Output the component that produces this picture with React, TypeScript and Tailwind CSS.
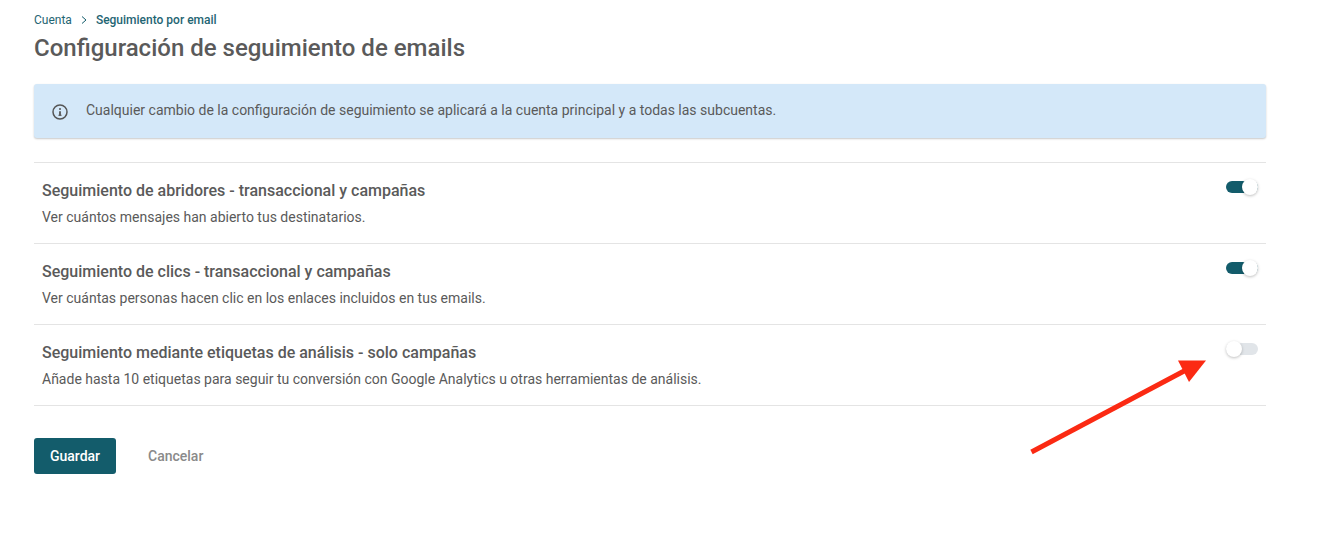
import React from 'react';

const rows = [
	{
		title: 'Seguimiento de abridores - transaccional y campañas',
		desc: 'Ver cuántos mensajes han abierto tus destinatarios.',
		on: true,
	},
	{
		title: 'Seguimiento de clics - transaccional y campañas',
		desc: 'Ver cuántas personas hacen clic en los enlaces incluidos en tus emails.',
		on: true,
	},
	{
		title: 'Seguimiento mediante etiquetas de análisis - solo campañas',
		desc: 'Añade hasta 10 etiquetas para seguir tu conversión con Google Analytics u otras herramientas de análisis.',
		on: false,
	},
];

const Toggle = ({ on }: { on: boolean }) => (
	<div className={`relative w-8 h-3 rounded-full ${on ? 'bg-[#135c6b]' : 'bg-[#e1e5e9]'}`}>
		<div
			className={`absolute top-[-2px] w-4 h-4 rounded-full bg-white shadow-[0_1px_3px_rgba(0,0,0,0.25)] ${
				on ? 'right-0' : 'left-0'
			}`}
		></div>
	</div>
);

const App: React.FC = () => {
	return (
		<div className="relative w-[1331px] h-[540px] overflow-hidden bg-white font-['Roboto',sans-serif] text-[#5a5a5a]">
			<div className="w-[1232px] ml-[34px] pt-[13px]">
				<div className="flex items-center h-[14px] text-xs leading-[14px] text-[#1f6573]">
					<span>Cuenta</span>
					<svg className="w-[6px] h-[8px] mx-[9px]" viewBox="0 0 6 8" fill="none" stroke="#135c6b" strokeWidth="1">
						<path d="M1 0.5 L5 4 L1 7.5" />
					</svg>
					<span className="font-medium">Seguimiento por email</span>
				</div>
				<h1 className="mt-[5px] text-2xl leading-[32px] font-medium">
					Configuración de seguimiento de emails
				</h1>

				<div className="flex items-center mt-[20px] h-[54px] pl-[18px] rounded-[3px] bg-[#d4e8f9] shadow-[0_1px_2px_rgba(0,0,0,0.22)]">
					<svg className="w-4 h-4 mt-[2px] mr-[18px]" viewBox="0 0 16 16" fill="none">
						<circle cx="8" cy="8" r="7" stroke="#555555" strokeWidth="1.5" />
						<path d="M8 7.2V11" stroke="#555555" strokeWidth="1.8" />
						<path d="M6.5 11.3H9.5" stroke="#555555" strokeWidth="1.2" />
						<circle cx="8" cy="5" r="1" fill="#555555" />
					</svg>
					<span className="mb-[2px] text-sm">
						Cualquier cambio de la configuración de seguimiento se aplicará a la cuenta principal y a todas las
						subcuentas.
					</span>
				</div>

				<div className="mt-[24px] border-t border-[#e4e4e4]">
					{rows.map((row, index) => (
						<div key={index} className="flex justify-between h-[81px] pl-2 pr-2 pt-[18px] border-b border-[#e4e4e4]">
							<div>
								<div className="text-base leading-[20px] font-medium">{row.title}</div>
								<div className="mt-[7px] text-sm leading-[18px]">{row.desc}</div>
							</div>
							<div>
								<Toggle on={row.on} />
							</div>
						</div>
					))}
				</div>

				<div className="flex items-center mt-[32px]">
					<button className="w-[82px] h-9 rounded-[3px] bg-[#135c6b] text-white text-sm font-medium">
						Guardar
					</button>
					<button className="ml-8 text-sm font-medium text-[#8a8a8a]">Cancelar</button>
				</div>
			</div>

			{/* flecha roja sobre el contenido */}
			<svg className="absolute left-[1025px] top-[355px]" width="185" height="105" viewBox="0 0 185 105">
				<path d="M6.5 97 L161 15" stroke="#fb2a13" strokeWidth="5" />
				<polygon points="153,5.5 181,5.5 164,27" fill="#fb2a13" />
			</svg>
		</div>
	);
};

export default App;
